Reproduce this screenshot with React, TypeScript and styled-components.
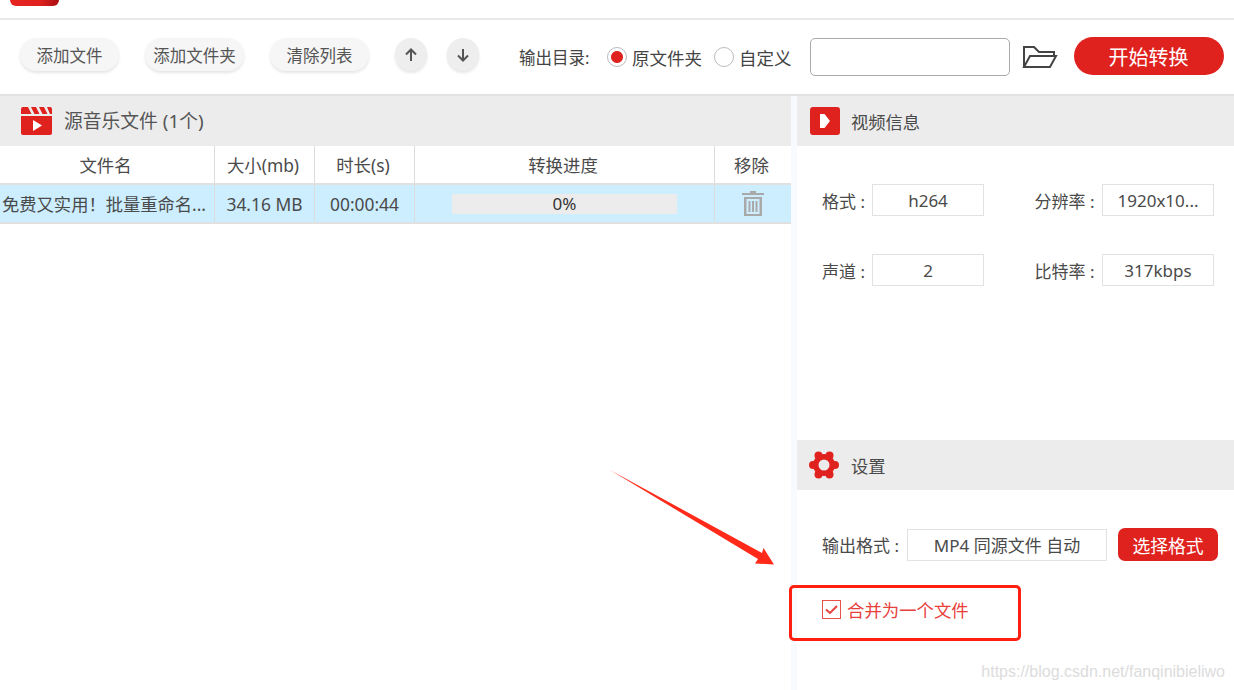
import { ReactElement } from "react";

import styled, { createGlobalStyle } from "styled-components";

const GlobalStyle = createGlobalStyle`
  html, body {
    margin: 0;
    padding: 0;
    background: #fff;
  }

  body {
    font-family: "Noto Sans", "Noto Sans CJK SC", sans-serif;
    color: #444;
  }

  * {
    box-sizing: border-box;
  }
`;

const Page = styled.div`
  position: relative;
  width: 1234px;
  height: 690px;
  overflow: hidden;
  display: flex;
  flex-direction: column;
`;

const TitleBar = styled.div`
  height: 20px;
  flex: none;
  padding-left: 10px;
  border-bottom: solid 2px #e9e9e9;
`;

const Logo = styled.div`
  width: 49px;
  height: 6px;
  border-radius: 0 0 6px 6px;
  background: linear-gradient(90deg, #e52420, #e0221f 60%, #a80d10);
`;

const Toolbar = styled.div`
  height: 76px;
  flex: none;
  display: flex;
  align-items: center;
  padding-left: 20px;
  border-bottom: solid 2px #e2e2e2;
`;

const ToolButton = styled.button`
  width: 99px;
  height: 33px;
  margin-right: 26px;
  margin-top: -5px;
  padding: 0;
  border: none;
  border-radius: 16px;
  background: #f6f6f6;
  box-shadow: 0 2px 3px #e6e6e6;
  color: #555;
  font: inherit;
  font-size: 16.5px;
`;

const RoundButton = styled.button`
  width: 32px;
  height: 33px;
  margin-right: 20px;
  margin-top: -5px;
  padding: 0;
  border: none;
  border-radius: 50%;
  background: #eeeeee;
  box-shadow: 0 2px 3px #e6e6e6;
  color: #555;
  display: flex;
  align-items: center;
  justify-content: center;
`;

const OutputLabel = styled.span`
  margin-left: 20px;
  width: 88px;
  flex: none;
  font-size: 16.5px;
  color: #444;
  white-space: nowrap;
`;

const Radio = styled.span<{ checked?: boolean }>`
  width: 20px;
  height: 20px;
  flex: none;
  border-radius: 50%;
  border: solid 1px #bbb;
  background: ${({ checked }) =>
    checked
      ? "radial-gradient(circle, #e0221f 0, #e0221f 5.5px, #fff 6.5px)"
      : "#fff"};
`;

const RadioLabel = styled.span`
  margin: 0 12px 0 5px;
  font-size: 17.5px;
  white-space: nowrap;
`;

const PathInput = styled.div`
  width: 200px;
  height: 38px;
  flex: none;
  margin-left: 6px;
  border: solid 1px #aaa;
  border-radius: 5px;
  background: #fff;
`;

const FolderIcon = styled.svg`
  width: 36px;
  height: 24px;
  flex: none;
  margin-left: 12px;
`;

const StartButton = styled.button`
  width: 150px;
  height: 38px;
  flex: none;
  margin-left: 16px;
  margin-top: -2px;
  padding: 0;
  border: none;
  border-radius: 19px;
  background: #e0221f;
  color: #fff;
  font: inherit;
  font-size: 20px;
`;

const Body = styled.div`
  flex: 1;
  display: flex;
  background: #f7fbff;
`;

const LeftPanel = styled.div`
  width: 791px;
  flex: none;
  background: #fff;
`;

const RightPanel = styled.div`
  width: 437px;
  margin-left: 6px;
  flex: none;
  background: #fff;
  display: flex;
  flex-direction: column;
`;

const SectionHeader = styled.div<{ $padLeft: number; $gap: number }>`
  height: 50px;
  flex: none;
  display: flex;
  align-items: center;
  gap: ${({ $gap }) => $gap}px;
  padding-left: ${({ $padLeft }) => $padLeft}px;
  background: #ececec;
  color: #4a4a4a;
  font-size: 17.3px;
`;

const LeftTitle = styled.span`
  margin-top: -2px;
  font-size: 18.8px;
  color: #555;
`;

const TableRow = styled.div<{ $active?: boolean }>`
  display: grid;
  grid-template-columns: 215px 100px 100px 300px 76px;
  height: 39px;
  background: ${({ $active }) => ($active ? "#cceeff" : "#fff")};
  border-bottom: solid 2px #e0e0e0;
`;

const Cell = styled.div`
  display: flex;
  align-items: center;
  justify-content: center;
  font-size: 17.4px;
  color: #4a4a4a;
  white-space: nowrap;
  overflow: hidden;
  border-right: solid 1px #dcdcdc;

  &:last-child {
    border-right: none;
  }
`;

const HeadCell = styled(Cell)`
  padding-right: 3px;
`;

const NameCell = styled(Cell)`
  justify-content: flex-start;
  padding-left: 2px;
  font-size: 17.3px;
`;

const Progress = styled.div`
  width: 225px;
  height: 20px;
  background: #ececec;
  display: flex;
  align-items: center;
  justify-content: center;
  font-size: 17px;
  color: #333;
`;

const InfoBlock = styled.div`
  flex: none;
  height: 294px;
  padding: 38px 20px 0 25px;
  display: grid;
  grid-template-columns: 162px 1fr;
  grid-auto-rows: 32px;
  row-gap: 38px;
`;

const InfoItem = styled.div`
  display: flex;
  align-items: center;
  justify-content: flex-end;
  white-space: nowrap;

  &:nth-child(odd) {
    justify-content: flex-start;
  }
`;

const InfoLabel = styled.span`
  min-width: 50px;
  padding-right: 3px;
  font-size: 17px;
  color: #4a4a4a;
  white-space: pre;
`;

const ValueBox = styled.div<{ $width: number }>`
  width: ${({ $width }) => $width}px;
  height: 32px;
  flex: none;
  display: flex;
  align-items: center;
  justify-content: center;
  border: solid 1px #e2e2e2;
  font-size: 17px;
  color: #4a4a4a;
`;

const FormatRow = styled.div`
  margin-top: 38px;
  padding-left: 25px;
  display: flex;
  align-items: center;
  white-space: nowrap;
`;

const FormatLabel = styled(InfoLabel)`
  min-width: 85px;
`;

const SelectButton = styled.button`
  width: 100px;
  height: 33px;
  margin-left: 11px;
  padding: 0;
  border: none;
  border-radius: 7px;
  background: #e0221f;
  color: #fff;
  font: inherit;
  font-size: 17.8px;
`;

const MergeRow = styled.div`
  margin-top: 36px;
  padding-left: 25px;
  display: flex;
  align-items: center;
  gap: 6px;
  font-size: 17.4px;
  color: #e8403a;
`;

const Checkbox = styled.span`
  width: 19px;
  height: 19px;
  flex: none;
  display: flex;
  align-items: center;
  justify-content: center;
  border: solid 1px #e8504a;
`;

const Callout = styled.div`
  position: absolute;
  left: 789px;
  top: 585px;
  width: 232px;
  height: 56px;
  border: solid 3px #ff1f10;
  border-radius: 5px;
`;

const Arrow = styled.svg`
  position: absolute;
  left: 600px;
  top: 460px;
  width: 190px;
  height: 120px;
`;

const Watermark = styled.div`
  position: absolute;
  right: 9px;
  top: 663px;
  font-family: "Liberation Sans", sans-serif;
  font-size: 16px;
  color: #dcdcdc;
`;

const columns = ["文件名", "大小(mb)", "时长(s)", "转换进度", "移除"];

const ArrowGlyph = ({ down }: { down?: boolean }): ReactElement => (
  <svg width="14" height="16" viewBox="0 0 14 16" fill="none" stroke="#555" strokeWidth="2">
    {down ? (
      <path d="M7 2v11M2 8.5 7 13.5l5-5" />
    ) : (
      <path d="M7 14V3M2 7.5 7 2.5l5 5" />
    )}
  </svg>
);

const ClapperIcon = (): ReactElement => (
  <svg width="31" height="28" viewBox="0 0 31 28">
    <path
      d="M2 0h5l3.500 7H0V2a2 2 0 0 1 2-2zM10 0h5l3.500 7h-5zM18 0h5l3.500 7h-5zM26 0h3a2 2 0 0 1 2 2v5h-2z"
      fill="#e0221f"
    />
    <path d="M0 9h31v17a2 2 0 0 1-2 2H2a2 2 0 0 1-2-2z" fill="#e0221f" />
    <path d="M12 13l9 5.500-9 5.500z" fill="#fff" />
  </svg>
);

const PlayIcon = (): ReactElement => (
  <svg width="30" height="28" viewBox="0 0 30 28">
    <rect width="30" height="28" rx="3" fill="#e0221f" />
    <path d="M10 7h4.500L20 14l-5.500 7H10z" fill="#fff" />
  </svg>
);

const GearIcon = (): ReactElement => (
  <svg width="30" height="28" viewBox="0 0 30 28">
    <g fill="#e0221f">
      <circle cx="15" cy="14" r="11" />
      <circle cx="9.500" cy="4.500" r="4" />
      <circle cx="20.500" cy="4.500" r="4" />
      <circle cx="4" cy="14" r="4" />
      <circle cx="26" cy="14" r="4" />
      <circle cx="9.500" cy="23.500" r="4" />
      <circle cx="20.500" cy="23.500" r="4" />
    </g>
    <circle cx="15" cy="14" r="5.500" fill="#ececec" />
  </svg>
);

const TrashIcon = (): ReactElement => (
  <svg width="22" height="25" viewBox="0 0 22 25" fill="#a9a9a9">
    <path d="M8 0h6v2h8v2H0V2h8z" />
    <path d="M2 6h18v19H2zM4.500 8v15h13V8z" fillRule="evenodd" />
    <path d="M6.500 10h2v11h-2zM10 10h2v11h-2zM13.500 10h2v11h-2z" />
  </svg>
);

const App = (): ReactElement => {
  return (
    <Page>
      <GlobalStyle />
      <TitleBar>
        <Logo />
      </TitleBar>
      <Toolbar>
        <ToolButton>添加文件</ToolButton>
        <ToolButton>添加文件夹</ToolButton>
        <ToolButton>清除列表</ToolButton>
        <RoundButton>
          <ArrowGlyph />
        </RoundButton>
        <RoundButton>
          <ArrowGlyph down />
        </RoundButton>
        <OutputLabel>输出目录:</OutputLabel>
        <Radio checked />
        <RadioLabel>原文件夹</RadioLabel>
        <Radio />
        <RadioLabel>自定义</RadioLabel>
        <PathInput />
        <FolderIcon viewBox="0 0 36 24" fill="none" stroke="#444" strokeWidth="2">
          <path d="M2 22V2h10l5 5h15v4" />
          <path d="M2 22 8 11h26l-6 11z" />
        </FolderIcon>
        <StartButton>开始转换</StartButton>
      </Toolbar>
      <Body>
        <LeftPanel>
          <SectionHeader $padLeft={21} $gap={12}>
            <ClapperIcon />
            <LeftTitle>源音乐文件 (1个)</LeftTitle>
          </SectionHeader>
          <TableRow>
            {columns.map((column) => (
              <HeadCell key={column}>{column}</HeadCell>
            ))}
          </TableRow>
          <TableRow $active>
            <NameCell>免费又实用！批量重命名...</NameCell>
            <Cell>34.16 MB</Cell>
            <Cell>00:00:44</Cell>
            <Cell>
              <Progress>0%</Progress>
            </Cell>
            <Cell>
              <TrashIcon />
            </Cell>
          </TableRow>
        </LeftPanel>
        <RightPanel>
          <SectionHeader $padLeft={13} $gap={11}>
            <PlayIcon />
            视频信息
          </SectionHeader>
          <InfoBlock>
            <InfoItem>
              <InfoLabel>格式 : </InfoLabel>
              <ValueBox $width={112}>h264</ValueBox>
            </InfoItem>
            <InfoItem>
              <InfoLabel>分辨率 : </InfoLabel>
              <ValueBox $width={112}>1920x10...</ValueBox>
            </InfoItem>
            <InfoItem>
              <InfoLabel>声道 : </InfoLabel>
              <ValueBox $width={112}>2</ValueBox>
            </InfoItem>
            <InfoItem>
              <InfoLabel>比特率 : </InfoLabel>
              <ValueBox $width={112}>317kbps</ValueBox>
            </InfoItem>
          </InfoBlock>
          <SectionHeader $padLeft={12} $gap={12}>
            <GearIcon />
            设置
          </SectionHeader>
          <FormatRow>
            <FormatLabel>输出格式 : </FormatLabel>
            <ValueBox $width={200}>MP4 同源文件 自动</ValueBox>
            <SelectButton>选择格式</SelectButton>
          </FormatRow>
          <MergeRow>
            <Checkbox>
              <svg width="13" height="11" viewBox="0 0 13 11" fill="none" stroke="#e8403a" strokeWidth="2">
                <path d="M1 5.500 5 9l7-7" />
              </svg>
            </Checkbox>
            合并为一个文件
          </MergeRow>
        </RightPanel>
      </Body>
      <Arrow viewBox="0 0 190 120">
        <path d="M10 10 162 93 163.500 88 174 104.500 155 103.500 158 99z" fill="#ff2a1a" />
      </Arrow>
      <Callout />
      <Watermark>https://blog.csdn.net/fanqinibieliwo</Watermark>
    </Page>
  );
};

export default App;
